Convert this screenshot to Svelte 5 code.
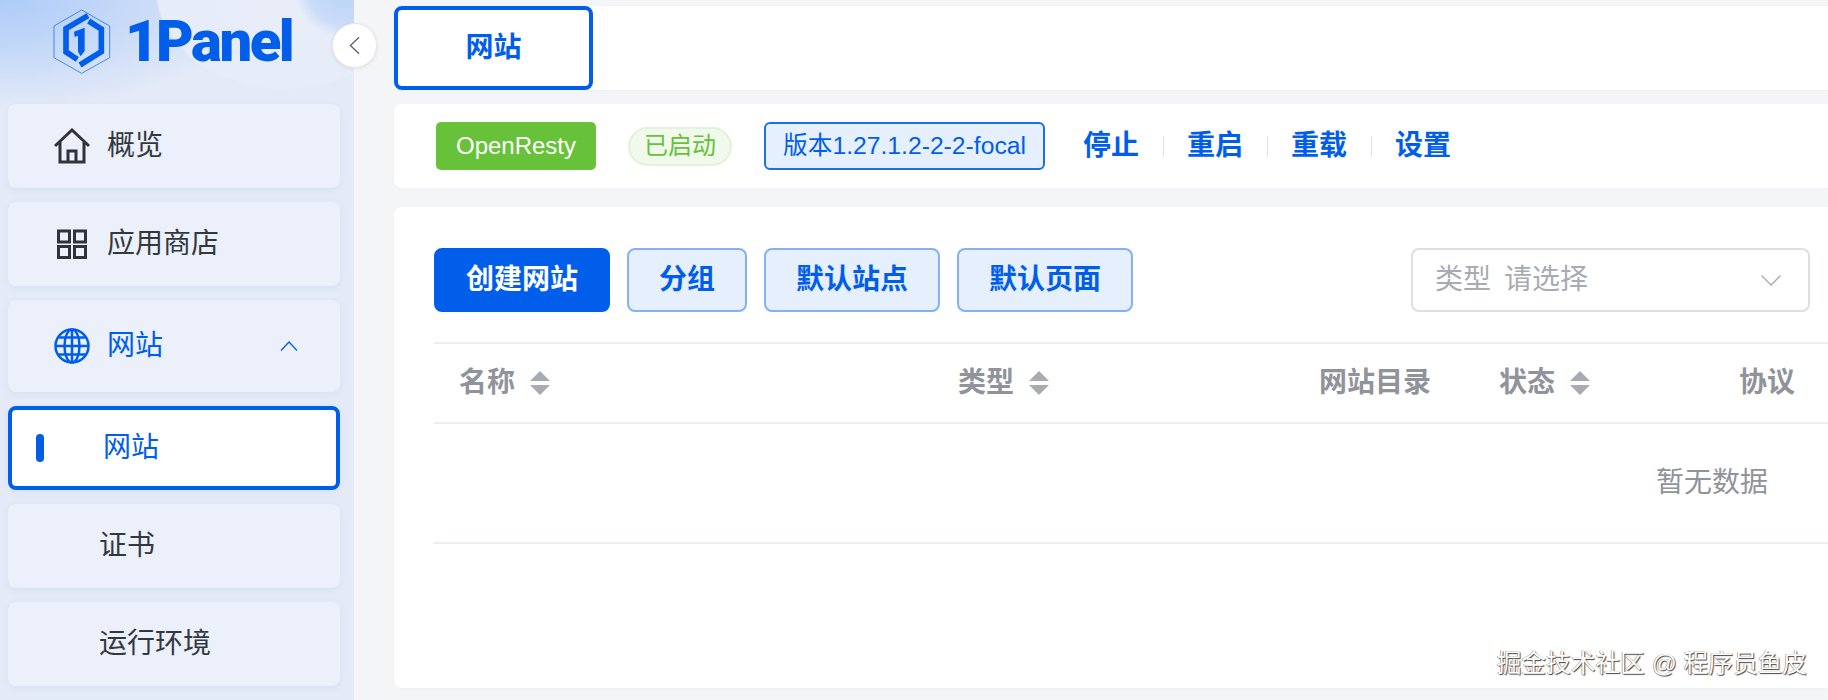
<script>
  const buttons = ['分组', '默认站点', '默认页面'];
  const links = ['停止', '重启', '重载', '设置'];
</script>

<div class="page">
  <aside class="sidebar">
    <div class="logo">
      <svg class="logo-mark" viewBox="0 0 240 240" aria-hidden="true">
        <path d="M113 27 197 75V170L113 217 30 170V75Z" fill="none" stroke="#005eeb" stroke-width="2" />
        <path d="M132 44 66 83V153L100 175" fill="none" stroke="#005eeb" stroke-width="17" />
        <path d="M134 60 172 84V152L108 192" fill="none" stroke="#005eeb" stroke-width="17" />
        <path d="M90 92 122 80V150L110 166 102 152V104L92 108Z" fill="#005eeb" />
      </svg>
      <span class="logo-text">1Panel</span>
    </div>

    <nav class="menu">
      <div class="item">
        <svg class="icon" viewBox="0 0 36 36" fill="none" stroke="#2f343b" stroke-width="3" aria-hidden="true">
          <path d="M1 18 18 2l17 16M6 14v20h24V14" />
          <path d="M14 34V23h8v11" />
        </svg>
        <span>概览</span>
      </div>
      <div class="item">
        <svg class="icon" viewBox="0 0 36 36" fill="none" stroke="#2f343b" stroke-width="3" aria-hidden="true">
          <rect x="4.500" y="5" width="11" height="11" />
          <rect x="20.500" y="5" width="11" height="11" />
          <rect x="4.500" y="20.500" width="11" height="11" />
          <rect x="20.500" y="20.500" width="11" height="11" />
        </svg>
        <span>应用商店</span>
      </div>
      <div class="item group">
        <svg class="icon" viewBox="0 0 36 36" fill="none" stroke="#005eeb" stroke-width="2.500" aria-hidden="true">
          <circle cx="18" cy="18" r="16.500" />
          <ellipse cx="18" cy="18" rx="7.500" ry="16.500" />
          <path d="M18 1.500v33M1.500 18h33M4.500 9.500h27M4.500 26.500h27" />
        </svg>
        <span>网站</span>
        <svg class="arrow" viewBox="0 0 18 10" fill="none" stroke="#005eeb" stroke-width="1.300" aria-hidden="true">
          <path d="M1 9.500 9 1l8 8.500" />
        </svg>
      </div>
      <div class="item sub active">
        <i class="bar"></i>
        <span>网站</span>
      </div>
      <div class="item sub">证书</div>
      <div class="item sub">运行环境</div>
    </nav>

    <button class="collapse" aria-label="收起">
      <svg viewBox="0 0 12 20" fill="none" stroke="#555b63" stroke-width="1.300" aria-hidden="true">
        <path d="M11 1 1.500 10 11 19" />
      </svg>
    </button>
  </aside>

  <main class="main">
    <div class="card tabs">
      <div class="tab">网站</div>
    </div>

    <div class="card status">
      <span class="tag-app">OpenResty</span>
      <span class="tag-state">已启动</span>
      <span class="tag-version">版本1.27.1.2-2-2-focal</span>
      <div class="links">
        {#each links as link, i}
          {#if i > 0}<i class="sep"></i>{/if}
          <a href="#top">{link}</a>
        {/each}
      </div>
    </div>

    <div class="card content">
      <div class="toolbar">
        <button class="btn primary">创建网站</button>
        {#each buttons as label}
          <button class="btn">{label}</button>
        {/each}
        <div class="select">
          <span class="select-label">类型</span>
          <span class="select-holder">请选择</span>
          <svg viewBox="0 0 20 11" fill="none" stroke="#a8abb2" stroke-width="1.300" aria-hidden="true">
            <path d="M.5.500 10 10 19.500.5" />
          </svg>
        </div>
      </div>

      <div class="table">
        <div class="row head">
          <div class="th">名称 <i class="sort"></i></div>
          <div class="th">类型 <i class="sort"></i></div>
          <div class="th">网站目录</div>
          <div class="th">状态 <i class="sort"></i></div>
          <div class="th">协议</div>
        </div>
        <div class="empty">暂无数据</div>
      </div>
    </div>
  </main>

  <div class="watermark">掘金技术社区 @ 程序员鱼皮</div>
</div>

<style>
  :global(body) {
    margin: 0;
    background: #f4f5f7;
  }

  .page {
    position: relative;
    display: flex;
    height: 700px;
    overflow: hidden;
    font-family: "Liberation Sans", "Noto Sans CJK SC", sans-serif;
    font-size: 28px;
    line-height: 1.2;
  }

  .sidebar {
    position: relative;
    flex: 0 0 354px;
    box-sizing: border-box;
    padding: 0 14px 0 8px;
    background:
      radial-gradient(circle at 345px -14px, #b9d2f7 0, #c9dcf8 38px, rgba(201, 220, 248, 0) 52px),
      radial-gradient(ellipse 130px 100px at 285px -10px, #e9eef9 0, #e6ecf8 98%, rgba(230, 236, 248, 0) 100%),
      radial-gradient(ellipse 260px 110px at 0 0, #aecbf8 0, #c4d8f8 45%, rgba(196, 216, 248, 0) 100%),
      #e4eaf7;
  }

  .logo {
    display: flex;
    align-items: center;
    height: 104px;
    padding: 0 0 22px 36px;
    box-sizing: border-box;
  }

  .logo-mark {
    flex: none;
    width: 80px;
    height: 80px;
    margin-right: 1px;
  }

  .logo-text {
    font-family: "Roboto", sans-serif;
    font-size: 58px;
    font-weight: 900;
    letter-spacing: -2.500px;
    color: #005eeb;
    line-height: 1;
  }

  .menu {
    display: flex;
    flex-direction: column;
    gap: 14px;
  }

  .item {
    display: flex;
    align-items: center;
    height: 84px;
    padding-left: 46px;
    box-sizing: border-box;
    border-radius: 8px;
    background: #ebf0fa;
    box-shadow: 0 2px 6px rgba(160, 180, 220, 0.16);
    color: #33383f;
  }

  .icon {
    width: 36px;
    height: 36px;
    margin-right: 17px;
  }

  .group {
    height: 92px;
    color: #005eeb;
    position: relative;
  }

  .arrow {
    position: absolute;
    left: 272px;
    top: 41px;
    width: 18px;
    height: 10px;
  }

  .sub {
    padding-left: 91px;
  }

  .active {
    position: relative;
    border: 4px solid #005eeb;
    background: #fff;
    color: #005eeb;
    padding-left: 91px;
  }

  .bar {
    position: absolute;
    left: 24px;
    top: 24px;
    width: 8px;
    height: 28px;
    border-radius: 4px;
    background: #005eeb;
  }

  .collapse {
    position: absolute;
    left: 332px;
    top: 23px;
    display: flex;
    align-items: center;
    justify-content: center;
    width: 45px;
    height: 45px;
    padding: 0;
    border: 1px solid #e6e8ec;
    border-radius: 50%;
    background: #fff;
    box-shadow: 0 1px 4px rgba(0, 0, 0, 0.08);
  }

  .collapse svg {
    width: 11px;
    height: 19px;
  }

  .main {
    flex: 1;
    min-width: 0;
    display: flex;
    flex-direction: column;
    gap: 14px;
    padding: 6px 0 12px 40px;
  }

  .card {
    background: #fff;
    border-radius: 8px 0 0 8px;
    box-shadow: 0 1px 4px rgba(0, 0, 0, 0.02);
  }

  .tabs {
    height: 84px;
    flex: none;
  }

  .tab {
    display: flex;
    align-items: center;
    justify-content: center;
    width: 199px;
    height: 84px;
    box-sizing: border-box;
    border: 4px solid #005eeb;
    border-radius: 8px;
    color: #005eeb;
    font-weight: 700;
  }

  .status {
    flex: none;
    display: flex;
    align-items: center;
    height: 84px;
    padding-left: 42px;
  }

  .tag-app {
    display: flex;
    align-items: center;
    justify-content: center;
    width: 160px;
    height: 48px;
    border-radius: 5px;
    background: #67c23a;
    color: #fff;
    font-size: 24px;
  }

  .tag-state {
    display: flex;
    align-items: center;
    justify-content: center;
    width: 104px;
    height: 39px;
    box-sizing: border-box;
    margin-left: 32px;
    border: 2px solid #e1f3d8;
    border-radius: 20px;
    background: #f0f9eb;
    color: #67c23a;
    font-size: 24px;
  }

  .tag-version {
    display: flex;
    align-items: center;
    justify-content: center;
    width: 281px;
    height: 48px;
    box-sizing: border-box;
    margin-left: 32px;
    border: 2px solid #1f6fe0;
    border-radius: 6px;
    background: #e6effd;
    color: #005eeb;
    font-size: 24.700px;
  }

  .links {
    display: flex;
    align-items: center;
    margin-left: 38px;
  }

  .links a {
    color: #005eeb;
    font-weight: 700;
    text-decoration: none;
  }

  .sep {
    width: 1px;
    height: 20px;
    margin: 0 23.500px;
    background: #dcdfe6;
  }

  .content {
    flex: 1;
    padding: 41px 0 0 40px;
    margin-top: 5px;
  }

  .toolbar {
    display: flex;
    align-items: center;
    gap: 17px;
    height: 64px;
  }

  .btn {
    height: 64px;
    padding: 0 30px;
    box-sizing: border-box;
    border: 2px solid #86b1f0;
    border-radius: 8px;
    background: #e6effd;
    color: #005eeb;
    font-family: inherit;
    font-size: 28px;
    line-height: 1.2;
    font-weight: 700;
  }

  .primary {
    border-color: #005eeb;
    background: #005eeb;
    color: #fff;
  }

  .select {
    display: flex;
    align-items: center;
    width: 399px;
    height: 64px;
    box-sizing: border-box;
    margin-left: auto;
    margin-right: 18px;
    padding: 0 27px 0 22px;
    border: 2px solid #dcdfe6;
    border-radius: 8px;
    color: #a8abb2;
  }

  .select-label {
    margin-right: 13px;
  }

  .select svg {
    width: 20px;
    height: 11px;
    margin-left: auto;
  }

  .table {
    margin-top: 30px;
    border-top: 2px solid #ebeef5;
  }

  .row {
    display: grid;
    grid-template-columns: 499px 361px 180px 240px auto;
    align-items: center;
    height: 78px;
    padding-left: 25px;
    border-bottom: 2px solid #ebeef5;
  }

  .th {
    display: flex;
    align-items: center;
    gap: 15px;
    color: #909399;
    font-weight: 700;
  }

  .sort {
    position: relative;
    width: 20px;
    height: 24px;
  }

  .sort::before,
  .sort::after {
    content: "";
    position: absolute;
    left: 0;
    border-left: 10px solid transparent;
    border-right: 10px solid transparent;
  }

  .sort::before {
    top: 0;
    border-bottom: 10px solid #a8abb2;
  }

  .sort::after {
    bottom: 0;
    border-top: 10px solid #a8abb2;
  }

  .empty {
    display: flex;
    align-items: center;
    justify-content: flex-end;
    height: 118px;
    padding-right: 60px;
    border-bottom: 2px solid #ebeef5;
    color: #909399;
  }

  .watermark {
    position: absolute;
    right: 21px;
    top: 648px;
    color: #fff;
    font-size: 24.700px;
    line-height: 32px;
    text-shadow: 1px 1px 1px #444, -0.5px -0.5px 0 #777;
    white-space: nowrap;
  }
</style>
